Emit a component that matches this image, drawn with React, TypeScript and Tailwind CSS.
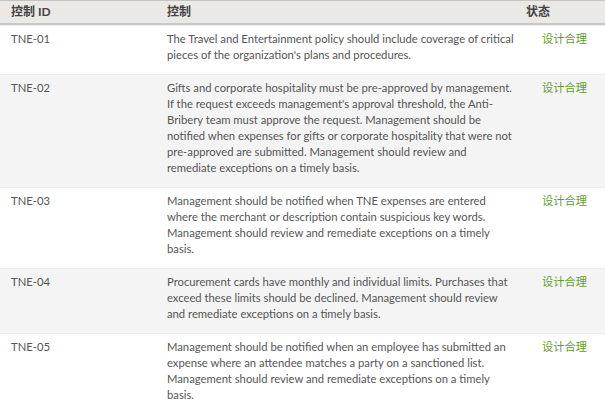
import React from "react";

const rows = [
  {
    id: "TNE-01",
    text: "The Travel and Entertainment policy should include coverage of critical pieces of the organization's plans and procedures.",
  },
  {
    id: "TNE-02",
    text: "Gifts and corporate hospitality must be pre-approved by management. If the request exceeds management's approval threshold, the Anti-Bribery team must approve the request. Management should be notified when expenses for gifts or corporate hospitality that were not pre-approved are submitted. Management should review and remediate exceptions on a timely basis.",
  },
  {
    id: "TNE-03",
    text: "Management should be notified when TNE expenses are entered where the merchant or description contain suspicious key words. Management should review and remediate exceptions on a timely basis.",
  },
  {
    id: "TNE-04",
    text: "Procurement cards have monthly and individual limits. Purchases that exceed these limits should be declined. Management should review and remediate exceptions on a timely basis.",
  },
  {
    id: "TNE-05",
    text: "Management should be notified when an employee has submitted an expense where an attendee matches a party on a sanctioned list. Management should review and remediate exceptions on a timely basis.",
  },
];

export default function App() {
  return (
    <div
      className="w-[605px] h-[404px] overflow-hidden bg-white text-[#555] text-[11.25px] leading-[16px]"
      style={{ fontFamily: "Lato, 'Noto Sans CJK SC', sans-serif" }}
    >
      <div className="flex h-[25px] items-center bg-[#ebe9e6] border-t border-t-[#c4c4c4] border-b-2 border-b-[#c8c8c8] font-bold text-[#444] text-[12px]">
        <div className="w-[156px] pl-[11px]">控制 ID</div>
        <div className="w-[361px] pl-[11px]">控制</div>
        <div className="flex-1 pl-[9px]">状态</div>
      </div>
      {rows.map((r, i) => (
        <div
          key={r.id}
          className={`flex pt-[5px] pb-[11px] border-t border-[#ececec] ${i % 2 === 1 ? "bg-[#f4f4f4]" : "bg-white"}`}
        >
          <div className="w-[156px] pl-[11px] shrink-0">{r.id}</div>
          <div className="w-[361px] pl-[11px] shrink-0">{r.text}</div>
          <div className="flex-1 pl-[25px] text-[#5f9e2b]">设计合理</div>
        </div>
      ))}
    </div>
  );
}
